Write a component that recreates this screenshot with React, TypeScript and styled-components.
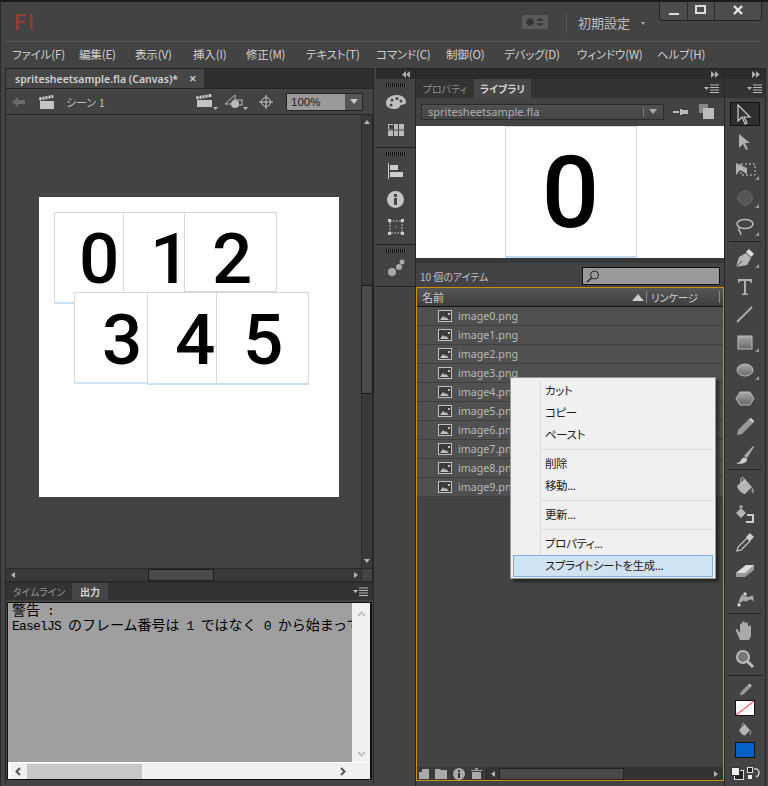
import React from 'react';
import styled, { createGlobalStyle } from 'styled-components';

const GlobalStyle = createGlobalStyle`
  html, body {
    margin: 0;
    padding: 0;
    background: #434343;
  }
  * {
    box-sizing: border-box;
  }
`;

const JP = `"Noto Sans CJK JP", "Noto Sans", sans-serif`;

const Win = styled.div`
  width: 768px;
  height: 786px;
  position: relative;
  overflow: hidden;
  display: flex;
  flex-direction: column;
  background: #434343;
  border-top: 2px solid #1b1b1b;
  border-left: 1px solid #2a2a2a;
  font-family: ${JP};
  font-feature-settings: "palt";
  color: #c8c8c8;
`;

const TitleBar = styled.div`
  height: 40px;
  flex: none;
  display: flex;
  align-items: flex-start;
  margin: 0 8px 0 4px;
  border-bottom: 1px solid #555;
`;

const Logo = styled.div`
  font-family: Roboto, sans-serif;
  font-weight: 500;
  font-size: 22px;
  line-height: 23px;
  color: #8f3f2f;
  width: 26px;
  margin: 9px 0 0 9px;
  letter-spacing: 2px;
`;

const SyncButton = styled.div`
  margin: 13px 0 0 482px;
  width: 26px;
  height: 14px;
  border-radius: 2px;
  background: #5a5a5a;
  display: flex;
  align-items: center;
  justify-content: center;
`;

const TitleSep = styled.div`
  width: 1px;
  height: 20px;
  background: #5a5a5a;
  margin: 11px 0 0 18px;
`;

const Workspace = styled.div`
  font-size: 13px;
  line-height: 16px;
  margin: 13px 0 0 11px;
  color: #bdbdbd;
  white-space: nowrap;
  width: 70px;
`;

const WindowCaret = styled.span`
  display: inline-block;
  margin-left: 11px;
  vertical-align: middle;
  width: 0;
  height: 0;
  border: 2.5px solid transparent;
  border-top: 3px solid #aaa;
`;

const WindowButtons = styled.div`
  position: absolute;
  top: -2px;
  left: 658px;
  width: 103px;
  height: 21px;
  display: flex;
  border: 1px solid #232323;
  border-top: none;
  border-radius: 0 0 4px 4px;
  background: #4c4c4c;
`;

const WindowButton = styled.div<{ $w: number }>`
  width: ${(p) => p.$w}px;
  display: flex;
  align-items: center;
  justify-content: center;
  border-right: 1px solid #2a2a2a;
  &:last-child {
    border-right: none;
  }
`;

const MenuBar = styled.div`
  height: 26px;
  flex: none;
  display: flex;
  align-items: center;
  padding: 0 0 2px 11px;
`;

const MenuItem = styled.div<{ $w: number }>`
  width: ${(p) => p.$w}px;
  font-size: 11.5px;
  line-height: 16px;
  letter-spacing: -0.15px;
  color: #cfcfcf;
  white-space: nowrap;
`;

const Main = styled.div`
  flex: 1;
  min-height: 0;
  display: flex;
  padding-left: 4px;
`;

const LeftColumn = styled.div`
  width: 369px;
  margin-right: 2px;
  flex: none;
  display: flex;
  flex-direction: column;
  border: 1px solid #262626;
  border-bottom: none;
  height: 716px;
`;

const DocTabs = styled.div`
  height: 20px;
  flex: none;
  display: flex;
  background: #2f2f2f;
  border-bottom: 1px solid #262626;
`;

const DocTab = styled.div`
  width: 198px;
  display: flex;
  align-items: center;
  justify-content: space-between;
  padding: 0 7px 0 9px;
  background: #464646;
  font-family: "Noto Sans", sans-serif;
  font-size: 10.5px;
  font-weight: 600;
  color: #d0d0d0;
  white-space: nowrap;
`;

const CloseX = styled.span`
  font-size: 9px;
  color: #ccc;
  font-weight: 700;
`;

const SceneBar = styled.div`
  height: 26px;
  flex: none;
  display: flex;
  align-items: center;
  padding-left: 6px;
  border-bottom: 1px solid #262626;
`;

const Spaced = styled.span<{ $left: number }>`
  display: flex;
  margin-left: ${(p) => p.$left}px;
`;

const SceneLabel = styled.div`
  margin-left: 11px;
  width: 130px;
  font-size: 11px;
  color: #bbb;
  white-space: nowrap;
`;

const ZoomCombo = styled.div`
  margin-left: 13px;
  width: 77px;
  height: 18px;
  display: flex;
  background: #2f2f2f;
  border: 1px solid #222;
`;

const ZoomValue = styled.div`
  width: 58px;
  background: #9a9a9a;
  color: #1c1c1c;
  font-family: "Liberation Sans", sans-serif;
  font-size: 11.5px;
  line-height: 16px;
  padding-left: 4px;
`;

const ZoomArrow = styled.div`
  flex: 1;
  background: #555;
  display: flex;
  align-items: center;
  justify-content: center;
`;

const Caret = styled.span<{ $dir: 'up' | 'down' | 'left' | 'right'; $color?: string; $size?: number }>`
  display: block;
  flex: none;
  width: 0;
  height: 0;
  border: ${(p) => p.$size ?? 4}px solid transparent;
  ${(p) => {
    const c = p.$color ?? '#b5b5b5';
    const s = p.$size ?? 4;
    if (p.$dir === 'up') return `border-bottom: ${s + 1}px solid ${c}; border-top: none;`;
    if (p.$dir === 'down') return `border-top: ${s + 1}px solid ${c}; border-bottom: none;`;
    if (p.$dir === 'left') return `border-right: ${s + 1}px solid ${c}; border-left: none;`;
    return `border-left: ${s + 1}px solid ${c}; border-right: none;`;
  }}
`;

const StageRow = styled.div`
  height: 453px;
  flex: none;
  display: flex;
`;

const Stage = styled.div`
  flex: 1;
  padding: 82px 0 0 33px;
  background: #434343;
`;

const Canvas = styled.div`
  width: 300px;
  height: 300px;
  background: #fff;
  position: relative;
`;

const Sprite = styled.div<{ $x: number; $y: number; $w: number; $h: number; $px: number; $pt: number; $edge: string }>`
  position: absolute;
  left: ${(p) => p.$x}px;
  top: ${(p) => p.$y}px;
  width: ${(p) => p.$w}px;
  height: ${(p) => p.$h}px;
  background: #fff;
  border: 1px solid #d9d9d9;
  border-bottom: 2px solid ${(p) => p.$edge};
  padding: ${(p) => p.$pt}px 0 0 ${(p) => p.$px}px;
  font-family: Roboto, "Liberation Sans", sans-serif;
  font-weight: 500;
  font-size: 71px;
  line-height: 71px;
  color: #000;
`;

const VScroll = styled.div`
  width: 12px;
  flex: none;
  display: flex;
  flex-direction: column;
  align-items: center;
  background: #393939;
  border-left: 1px solid #2a2a2a;
  border-right: 1px solid #2a2a2a;
`;

const VThumb = styled.div`
  width: 12px;
  height: 109px;
  margin-top: 156px;
  flex: none;
  background: #4a4a4a;
  border: 1px solid #1c1c1c;
`;

const ScrollEnd = styled.div`
  height: 14px;
  width: 100%;
  flex: none;
  display: flex;
  align-items: center;
  justify-content: center;
`;

const ScrollFill = styled.div`
  flex: 1;
`;

const HScrollRow = styled.div`
  height: 13px;
  flex: none;
  display: flex;
  background: #393939;
  border-top: 1px solid #2a2a2a;
`;

const HBar = styled.div`
  flex: 1;
  display: flex;
  align-items: center;
  padding: 0 3px 0 5px;
`;

const HCorner = styled.div`
  width: 12px;
  flex: none;
  background: #434343;
  border-left: 1px solid #2a2a2a;
  border-right: 1px solid #2a2a2a;
`;

const HThumb = styled.div`
  width: 66px;
  height: 12px;
  margin-left: 133px;
  background: #4a4a4a;
  border: 1px solid #1c1c1c;
`;

const HFill = styled.div`
  flex: 1;
`;

const PanelTabs = styled.div`
  height: 19px;
  flex: none;
  display: flex;
  align-items: stretch;
  background: #333;
  border-top: 2px solid #2a2a2a;
`;

const PanelTab = styled.div<{ $active?: boolean; $w: number }>`
  width: ${(p) => p.$w}px;
  display: flex;
  align-items: center;
  justify-content: center;
  font-size: 10px;
  font-weight: ${(p) => (p.$active ? 700 : 400)};
  color: ${(p) => (p.$active ? '#d5d5d5' : '#8f8f8f')};
  background: ${(p) => (p.$active ? '#464646' : 'transparent')};
  white-space: nowrap;
`;

const PanelMenu = styled.div`
  margin-left: auto;
  width: 20px;
  display: flex;
  align-items: center;
`;

const OutputFrame = styled.div`
  height: 178px;
  margin: 2px 1px 0;
  flex: none;
  display: flex;
  flex-direction: column;
  border: 1px solid #111;
  border-right-width: 2px;
  background: #f0f0f0;
`;

const OutputTop = styled.div`
  flex: 1;
  min-height: 0;
  display: flex;
`;

const OutputText = styled.div`
  flex: 1;
  min-width: 0;
  overflow: hidden;
  background: #9f9f9f;
  padding-left: 4px;
  font-family: "Noto Sans CJK JP", monospace;
  font-feature-settings: normal;
  font-size: 14px;
  line-height: 13px;
  color: #000;
  white-space: pre;
`;

const Half = styled.span`
  font-family: "Liberation Mono", monospace;
  font-size: 13px;
  letter-spacing: -0.8px;
`;

const OutputVBar = styled.div`
  width: 18px;
  flex: none;
  display: flex;
  flex-direction: column;
  align-items: center;
  justify-content: space-between;
  padding: 8px 0 4px;
  border-bottom: 1px solid #f0f0f0;
`;

const OutputHBar = styled.div`
  height: 17px;
  flex: none;
  display: flex;
  align-items: center;
  padding: 0 24px 0 4px;
  border-left: 2px solid #fff;
  border-top: 1px solid #fff;
  margin-left: 1px;
`;

const OutputThumb = styled.div`
  width: 115px;
  height: 15px;
  margin-left: 6px;
  background: #c8c8c8;
`;

const Dock = styled.div`
  width: 40px;
  flex: none;
  display: flex;
  flex-direction: column;
  border-right: 1px solid #262626;
`;

const CollapseBar = styled.div<{ $align?: string }>`
  height: 11px;
  flex: none;
  display: flex;
  align-items: center;
  justify-content: ${(p) => p.$align ?? 'flex-end'};
  padding: 0 5px;
  background: #2b2b2b;
  border-top: 1px solid #222;
`;

const DockGroup = styled.div<{ $h: number }>`
  height: ${(p) => p.$h}px;
  flex: none;
  display: flex;
  flex-direction: column;
  align-items: center;
  border-bottom: 1px solid #222;
  background: #434343;
`;

const Grip = styled.div`
  width: 20px;
  height: 4px;
  margin: 4px 0 1px;
  background: repeating-linear-gradient(90deg, #111 0 1px, #555 1px 2px);
  flex: none;
`;

const DockIcon = styled.div`
  height: 28px;
  flex: none;
  display: flex;
  align-items: center;
  justify-content: center;
`;

const RightPanel = styled.div`
  width: 309px;
  flex: none;
  display: flex;
  flex-direction: column;
  border-right: 1px solid #262626;
`;

const PropTabs = styled.div`
  height: 19px;
  flex: none;
  display: flex;
  background: #333;
  align-items: stretch;
`;

const FileRow = styled.div`
  height: 28px;
  flex: none;
  display: flex;
  align-items: center;
  padding: 0 0 1px 5px;
`;

const FileSelect = styled.div`
  width: 243px;
  height: 16px;
  display: flex;
  align-items: center;
  justify-content: space-between;
  background: linear-gradient(#505050, #454545);
  border: 1px solid #2b2b2b;
  padding: 0 6px;
  font-family: "Noto Sans", sans-serif;
  font-size: 11px;
  color: #b0b0b0;
`;

const SelectEnd = styled.div`
  display: flex;
  align-items: center;
  gap: 5px;
`;

const SelectSep = styled.span`
  width: 1px;
  height: 10px;
  background: #777;
`;

const FileIcons = styled.div`
  display: flex;
  align-items: center;
  gap: 10px;
  margin-left: 9px;
`;

const Preview = styled.div`
  height: 132px;
  flex: none;
  background: #fff;
  display: flex;
  justify-content: center;
`;

const PreviewCard = styled.div`
  width: 132px;
  height: 132px;
  margin-left: 1px;
  border: 1px solid #d4d4d4;
  border-bottom: 2px solid #c2daef;
  font-family: Roboto, "Liberation Sans", sans-serif;
  font-weight: 500;
  font-size: 101px;
  line-height: 131px;
  text-align: center;
  color: #000;
`;

const PreviewGap = styled.div`
  height: 5px;
  flex: none;
  background: #383838;
`;

const CountRow = styled.div`
  height: 24px;
  flex: none;
  display: flex;
  align-items: center;
  justify-content: space-between;
  padding: 2px 4px 0 4px;
  font-size: 10px;
  color: #c0c0c0;
`;

const SearchBox = styled.div`
  width: 138px;
  height: 18px;
  background: #9a9a9a;
  border: 1px solid #111;
  display: flex;
  align-items: center;
  padding-left: 3px;
`;

const Library = styled.div`
  height: 494px;
  flex: none;
  display: flex;
  flex-direction: column;
  border: 1px solid #c8920e;
`;

const LibHead = styled.div`
  height: 19px;
  flex: none;
  display: flex;
  align-items: center;
  background: linear-gradient(#565656, #3e3e3e);
  border-bottom: 1px solid #111;
  font-size: 11px;
  color: #ccc;
  padding-left: 5px;
`;

const HeadName = styled.div`
  width: 208px;
`;

const HeadSort = styled.div`
  width: 15px;
  display: flex;
  justify-content: center;
`;

const HeadDivider = styled.div<{ $left: number }>`
  width: 1px;
  height: 12px;
  background: #888;
  margin-left: ${(p) => p.$left}px;
`;

const HeadLink = styled.div`
  width: 72px;
  padding-left: 4px;
  font-size: 10.5px;
  letter-spacing: -0.3px;
  white-space: nowrap;
`;

const LibRow = styled.div`
  height: 19px;
  flex: none;
  display: flex;
  align-items: center;
  padding-left: 21px;
  background: #505050;
  border-bottom: 1px solid #3f3f3f;
  font-family: "Noto Sans", sans-serif;
  font-size: 10.7px;
  color: #b8b8b8;
  white-space: nowrap;
`;

const RowName = styled.span`
  margin-left: 6px;
`;

const LibEmpty = styled.div`
  flex: 1;
  background: #434343;
`;

const LibFoot = styled.div`
  height: 13px;
  flex: none;
  display: flex;
  align-items: center;
  background: #3a3a3a;
  padding-left: 2px;
`;

const FootIcons = styled.div`
  width: 67px;
  flex: none;
  display: flex;
  align-items: center;
  gap: 6px;
`;

const FootScroll = styled.div`
  flex: 1;
  height: 13px;
  display: flex;
  align-items: center;
  background: #333;
  border-left: 1px solid #2a2a2a;
  padding: 0 5px 0 4px;
`;

const FootThumb = styled.div`
  width: 125px;
  height: 12px;
  margin-left: 4px;
  background: #484848;
  border: 1px solid #222;
`;

const ToolColumn = styled.div`
  flex: 1;
  display: flex;
  flex-direction: column;
  margin-right: 2px;
  border-right: 1px solid #262626;
`;

const ToolHead = styled.div`
  height: 19px;
  flex: none;
  display: flex;
  align-items: center;
  justify-content: flex-end;
  padding-right: 2px;
  background: #333;
`;

const ToolList = styled.div`
  display: flex;
  flex-direction: column;
  align-items: center;
  padding-top: 4px;
`;

const Tool = styled.div<{ $active?: boolean; $corner?: boolean }>`
  width: 30px;
  height: ${(p) => (p.$active ? 24 : 28)}px;
  margin-bottom: ${(p) => (p.$active ? 2 : 0)}px;
  flex: none;
  display: flex;
  align-items: center;
  justify-content: center;
  position: relative;
  background: ${(p) => (p.$active ? '#2e2e2e' : 'transparent')};
  border: ${(p) => (p.$active ? '1px solid #111' : 'none')};
  ${(p) =>
    p.$corner &&
    `&::after {
      content: '';
      position: absolute;
      right: 1px;
      bottom: 4px;
      border: 2px solid transparent;
      border-right-color: #999;
      border-bottom-color: #999;
    }`}
`;

const ToolSep = styled.div<{ $wide?: boolean; $top?: number; $bottom?: number }>`
  width: ${(p) => (p.$wide ? 36 : 32)}px;
  height: 1px;
  flex: none;
  background: #222;
  margin: ${(p) => p.$top ?? 1}px 0 ${(p) => p.$bottom ?? 2}px;
`;

const Swatch = styled.div<{ $bg: string; $top: number }>`
  width: 20px;
  height: 16px;
  flex: none;
  margin-top: ${(p) => p.$top}px;
  border: 1px solid #111;
  background: ${(p) => p.$bg};
`;

const SwatchIcon = styled.div<{ $top: number }>`
  margin-top: ${(p) => p.$top}px;
  height: 16px;
  flex: none;
  display: flex;
  align-items: center;
`;

const SwatchFoot = styled.div`
  display: flex;
  gap: 3px;
  margin-top: 9px;
`;

const ContextMenu = styled.div`
  position: absolute;
  left: 509px;
  top: 375px;
  width: 206px;
  height: 202px;
  padding: 2px;
  background: #f0f0f0;
  border: 1px solid #979797;
  box-shadow: 3px 3px 3px rgba(0, 0, 0, 0.45);
  font-size: 11.5px;
  letter-spacing: -0.4px;
  color: #1a1a1a;
  display: flex;
  flex-direction: column;
`;

const MenuGutter = styled.div`
  position: absolute;
  left: 29px;
  top: 2px;
  bottom: 2px;
  width: 1px;
  background: #dcdcdc;
`;

const CtxItem = styled.div<{ $hl?: boolean }>`
  position: relative;
  height: 22px;
  flex: none;
  display: flex;
  align-items: center;
  padding: 0 0 2px 31px;
  background: ${(p) => (p.$hl ? '#d1e2f2' : 'transparent')};
  border: 1px solid ${(p) => (p.$hl ? '#7eb0e0' : 'transparent')};
  white-space: nowrap;
`;

const CtxSep = styled.div`
  height: 1px;
  flex: none;
  margin: 3px 0 3px 29px;
  background: #d7d7d7;
`;

// icons
const Clapper = () => (
  <svg width={16} height={14} viewBox="0 0 16 14">
    <path d="M1 6h14v8H1z" fill="#c4c4c4" />
    <path d="M0 2.500 14 0l.6 2.800-14 2.600z" fill="#d6d6d6" />
    <path d="M3 2v3M6 1.500v3M9 1v3M12 .5v3" stroke="#444" />
  </svg>
);

const ClapperMenu = () => (
  <svg width={22} height={16} viewBox="0 0 22 16">
    <path d="M1 6h15v7H1z" fill="#c4c4c4" />
    <path d="M0 2.500 15 0l.6 2.800-15 2.600z" fill="#d6d6d6" />
    <path d="M3 2v3M6 1.500v3M9 1v3M12 .5v3" stroke="#444" />
    <path d="M17 13h5l-2.500 3z" fill="#bbb" />
  </svg>
);

const PanelMenuIcon = () => (
  <svg width={16} height={9} viewBox="0 0 16 9">
    <path d="M0 3h5L2.500 6z" fill="#bbb" />
    <path d="M6 1h9M6 3.500h9M6 6h9M6 8.500h9" stroke="#bbb" strokeWidth="1" />
  </svg>
);

const Chevrons = ({ left }: { left?: boolean }) => (
  <svg width={8} height={7} viewBox="0 0 8 7">
    {left ? <path d="M4 0v7L0 3.500zM8 0v7L4 3.500z" fill="#aaa" /> : <path d="M0 0v7l4-3.500zM4 0v7l4-3.500z" fill="#aaa" />}
  </svg>
);

const FileImage = () => (
  <svg width={14} height={12} viewBox="0 0 14 12">
    <rect x=".5" y=".5" width="13" height="11" fill="#3c3c3c" stroke="#c0c0c0" />
    <path d="M2 10l3-4 2 2 1-1 3 3z" fill="#c0c0c0" />
    <path d="M10 3h2v2h-2z" fill="#c0c0c0" />
  </svg>
);

const toolIcons: Record<string, React.ReactNode> = {
  arrow: <path d="M4 1v16l4-4 3 7 2-1-3-6h6z" fill="#333" stroke="#ccc" strokeWidth="1.200" />,
  sub: <path d="M5 2v14l4-4 3 6 2-1-3-6h5z" fill="#b0b0b0" />,
  lasso3: (
    <g>
      <path d="M2 3v12l4-5 7 4V8z" fill="#b0b0b0" />
      <rect x="7" y="4" width="14" height="11" fill="none" stroke="#ccc" strokeDasharray="2 2" />
    </g>
  ),
  sphere: (
    <g opacity=".45">
      <path d="M11 1l9 9-9 9-9-9z" fill="#777" />
      <circle cx="11" cy="10" r="7" fill="#6d6d6d" stroke="#888" />
    </g>
  ),
  lasso: (
    <g fill="none" stroke="#b5b5b5" strokeWidth="1.600">
      <ellipse cx="11" cy="8" rx="8" ry="4.500" />
      <path d="M5 12c-1 2 0 3 1 4s1 2 .5 3" />
    </g>
  ),
  pen: (
    <g>
      <path d="M2 19l3-10 7-4 5 5-4 7z" fill="#b5b5b5" />
      <path d="M12 4l3-3 5 5-3 3z" fill="#ddd" />
      <path d="M2 19l6-6" stroke="#444" />
    </g>
  ),
  text: <path d="M4 3h14v4h-1c0-1-1-2-2-2h-3v12l2 1v1H8v-1l2-1V5H7c-1 0-2 1-2 2H4z" fill="#b0b0b0" />,
  line: <path d="M3 18 18 3" stroke="#aaa" strokeWidth="2" />,
  rect: (
    <g>
      <defs>
        <linearGradient id="gr" x1="0" y1="0" x2="0" y2="1">
          <stop offset="0" stopColor="#aaa" />
          <stop offset="1" stopColor="#666" />
        </linearGradient>
      </defs>
      <rect x="4" y="4" width="14" height="13" fill="url(#gr)" stroke="#bbb" />
    </g>
  ),
  oval: <ellipse cx="11" cy="10" rx="8" ry="6" fill="url(#gr)" stroke="#bbb" />,
  poly: <path d="M6 4h10l4 6.500-4 6.500H6L2 10.500z" fill="url(#gr)" stroke="#bbb" />,
  pencil: (
    <g>
      <path d="M3 19l1-5L15 3l4 4L8 18z" fill="#999" />
      <path d="M15 3l2-1 3 3-1 2z" fill="#ddd" />
    </g>
  ),
  brush: (
    <g>
      <path d="M10 12 19 2l1 1-7 11z" fill="#aaa" />
      <path d="M2 19c3 0 4-1 5-3 1-2 3-3 5-2s1 3 0 4-7 3-10 1z" fill="#ccc" />
    </g>
  ),
  bucket: (
    <g>
      <path d="M3 10l8-7 7 8-7 7c-3 0-7-4-8-8z" fill="#b5b5b5" />
      <path d="M7 9V3c0-2 3-2 3 0v5" fill="none" stroke="#ccc" />
      <path d="M18 11c2 2 2 5 1 6s-2-1-1-6z" fill="#999" />
    </g>
  ),
  ink: (
    <g>
      <path d="M2 9l5-5 5 5-5 5z" fill="#b5b5b5" />
      <path d="M6 4V2h2v2" fill="none" stroke="#ccc" />
      <path d="M13 10h7v9h-8v-2h6v-5h-5z" fill="#ccc" />
    </g>
  ),
  dropper: (
    <g>
      <path d="M3 19l1-4 9-9 3 3-9 9z" fill="none" stroke="#ccc" strokeWidth="1.200" />
      <path d="M12 5l4-4 4 4-4 4z" fill="#ccc" />
    </g>
  ),
  eraser: (
    <g>
      <path d="M2 13 12 5h8v5l-9 7H2z" fill="#999" />
      <path d="M2 13 12 5h8l-9 8z" fill="#ddd" />
    </g>
  ),
  bone: (
    <g>
      <path d="M4 17c1-5 3-11 6-11s2 3 4 3 3-2 5-1l1 6c-1-2-3-3-5-2s-3 2-5 1-3 2-6 4z" fill="#aaa" />
      <circle cx="5" cy="17" r="2" fill="#ddd" stroke="#333" strokeWidth=".6" />
      <circle cx="11" cy="6" r="2" fill="#ddd" stroke="#333" strokeWidth=".6" />
    </g>
  ),
  hand: (
    <path
      d="M6 20 2 11c-1-2 1-3 2-1l2 3V5c0-2 2-2 2 0v4V3c0-2 3-2 3 0v6V4c0-2 3-2 3 0v6-3c0-2 3-2 3 0v7c0 4-2 6-3 6z"
      fill="#aaa"
    />
  ),
  zoom: (
    <g>
      <circle cx="9" cy="9" r="6" fill="#777" stroke="#bbb" strokeWidth="2" />
      <path d="M13 13l6 6" stroke="#bbb" strokeWidth="3" />
    </g>
  ),
};

const ToolIcon = ({ name }: { name: string }) => (
  <svg width={22} height={21} viewBox="0 0 22 21">
    {toolIcons[name]}
  </svg>
);

const menus: [string, number][] = [
  ['ファイル(F)', 67],
  ['編集(E)', 56],
  ['表示(V)', 58],
  ['挿入(I)', 53],
  ['修正(M)', 60],
  ['テキスト(T)', 70],
  ['コマンド(C)', 70],
  ['制御(O)', 58],
  ['デバッグ(D)', 73],
  ['ウィンドウ(W)', 80],
  ['ヘルプ(H)', 60],
];

const sprites = [
  { d: '0', x: 15, y: 15, w: 70, h: 92, px: 24, pt: 10, edge: '#c9dff2' },
  { d: '1', x: 84, y: 15, w: 62, h: 92, px: 26, pt: 10, edge: '#d9d9d9' },
  { d: '2', x: 145, y: 15, w: 93, h: 81, px: 27, pt: 10, edge: '#d9d9d9' },
  { d: '3', x: 35, y: 95, w: 74, h: 92, px: 27, pt: 11, edge: '#d0e4f7' },
  { d: '4', x: 108, y: 95, w: 70, h: 93, px: 27, pt: 11, edge: '#c9dff2' },
  { d: '5', x: 177, y: 95, w: 93, h: 93, px: 26, pt: 11, edge: '#c9dff2' },
];

const tools: ({ n: string; corner?: boolean } | 'sep')[] = [
  { n: 'sub' },
  { n: 'lasso3', corner: true },
  { n: 'sphere', corner: true },
  { n: 'lasso', corner: true },
  'sep',
  { n: 'pen', corner: true },
  { n: 'text' },
  { n: 'line' },
  { n: 'rect', corner: true },
  { n: 'oval', corner: true },
  { n: 'poly' },
  { n: 'pencil' },
  { n: 'brush' },
  'sep',
  { n: 'bucket' },
  { n: 'ink' },
  { n: 'dropper' },
  { n: 'eraser' },
  { n: 'bone' },
  'sep',
  { n: 'hand' },
  { n: 'zoom' },
];

export default function App() {
  return (
    <Win>
      <GlobalStyle />
      <TitleBar>
        <Logo>Fl</Logo>
        <SyncButton>
          <svg width={20} height={10} viewBox="0 0 20 10">
            <circle cx="5" cy="5" r="3" fill="#333" stroke="#333" strokeDasharray="1.500 1" strokeWidth="2" />
            <path d="M12 3h5l-2-2M18 7h-5l2 2" stroke="#333" strokeWidth="1.500" fill="none" />
          </svg>
        </SyncButton>
        <TitleSep />
        <Workspace>
          初期設定
          <WindowCaret />
        </Workspace>
      </TitleBar>
      <WindowButtons>
        <WindowButton $w={28}>
          <svg width={12} height={12} viewBox="0 0 12 12">
            <path d="M1 9h10v2H1z" fill="#ddd" />
          </svg>
        </WindowButton>
        <WindowButton $w={27}>
          <svg width={12} height={10} viewBox="0 0 12 10">
            <path d="M1 1h9v7H1z" fill="none" stroke="#ddd" strokeWidth="2" />
          </svg>
        </WindowButton>
        <WindowButton $w={46}>
          <svg width={12} height={10} viewBox="0 0 12 10">
            <path d="M2 1l8 8M10 1 2 9" stroke="#e8e8e8" strokeWidth="2.400" />
          </svg>
        </WindowButton>
      </WindowButtons>

      <MenuBar>
        {menus.map(([label, w]) => (
          <MenuItem key={label} $w={w}>
            {label}
          </MenuItem>
        ))}
      </MenuBar>

      <Main>
        <LeftColumn>
          <DocTabs>
            <DocTab>
              spritesheetsample.fla (Canvas)*
              <CloseX>✕</CloseX>
            </DocTab>
          </DocTabs>
          <SceneBar>
            <svg width={13} height={10} viewBox="0 0 13 10">
              <path d="M0 5l6-5v3h7v4H6v3z" fill="#6a6a6a" />
            </svg>
            <Spaced $left={14}>
              <Clapper />
            </Spaced>
            <SceneLabel>シーン 1</SceneLabel>
            <ClapperMenu />
            <Spaced $left={7}>
              <svg width={24} height={16} viewBox="0 0 24 16">
                <path d="M0 10 10 1v9z" fill="none" stroke="#bbb" />
                <circle cx="10" cy="10" r="4" fill="#bbb" />
                <rect x="10" y="6" width="7" height="5" fill="none" stroke="#bbb" />
                <path d="M18 13h5l-2.500 3z" fill="#bbb" />
              </svg>
            </Spaced>
            <Spaced $left={10}>
              <svg width={14} height={14} viewBox="0 0 14 14">
                <circle cx="7" cy="7" r="4.500" fill="none" stroke="#ccc" />
                <path d="M7 0v14M0 7h14" stroke="#ccc" />
              </svg>
            </Spaced>
            <ZoomCombo>
              <ZoomValue>100%</ZoomValue>
              <ZoomArrow>
                <Caret $dir="down" $size={4} $color="#ccc" />
              </ZoomArrow>
            </ZoomCombo>
          </SceneBar>

          <StageRow>
            <Stage>
              <Canvas>
                {sprites.map((s) => (
                  <Sprite key={s.d} $x={s.x} $y={s.y} $w={s.w} $h={s.h} $px={s.px} $pt={s.pt} $edge={s.edge}>
                    {s.d}
                  </Sprite>
                ))}
              </Canvas>
            </Stage>
            <VScroll>
              <ScrollEnd>
                <Caret $dir="up" $size={3} />
              </ScrollEnd>
              <VThumb />
              <ScrollFill />
              <ScrollEnd>
                <Caret $dir="down" $size={3} />
              </ScrollEnd>
            </VScroll>
          </StageRow>
          <HScrollRow>
            <HBar>
              <Caret $dir="left" $size={3} />
              <HThumb />
              <HFill />
              <Caret $dir="right" $size={3} />
            </HBar>
            <HCorner />
          </HScrollRow>

          <PanelTabs>
            <PanelTab $w={66}>タイムライン</PanelTab>
            <PanelTab $w={36} $active>
              出力
            </PanelTab>
            <PanelMenu>
              <PanelMenuIcon />
            </PanelMenu>
          </PanelTabs>
          <OutputFrame>
            <OutputTop>
              <OutputText>
                警告<Half> :</Half>
                {'\n'}
                <Half>EaselJS </Half>のフレーム番号は<Half> 1 </Half>ではなく<Half> 0 </Half>から始まって
              </OutputText>
              <OutputVBar>
                <svg width={9} height={6} viewBox="0 0 9 6">
                  <path d="M1 5l3.500-3.500L8 5" fill="none" stroke="#c0c0c0" strokeWidth="2" />
                </svg>
                <svg width={9} height={6} viewBox="0 0 9 6">
                  <path d="M1 1l3.500 3.500L8 1" fill="none" stroke="#c0c0c0" strokeWidth="2" />
                </svg>
              </OutputVBar>
            </OutputTop>
            <OutputHBar>
              <svg width={6} height={9} viewBox="0 0 6 9">
                <path d="M5 1 1.500 4.500 5 8" fill="none" stroke="#555" strokeWidth="2" />
              </svg>
              <OutputThumb />
              <HFill />
              <svg width={6} height={9} viewBox="0 0 6 9">
                <path d="M1 1l3.500 3.500L1 8" fill="none" stroke="#555" strokeWidth="2" />
              </svg>
            </OutputHBar>
          </OutputFrame>
        </LeftColumn>

        <Dock>
          <CollapseBar>
            <Chevrons left />
          </CollapseBar>
          <DockGroup $h={69}>
            <Grip />
            <DockIcon>
              <svg width={22} height={16} viewBox="0 0 22 16">
                <path d="M1 9c0-5 5-8 11-8s9 4 9 7-3 2-5 3-1 4-6 4S1 13 1 9z" fill="#c0c0c0" />
                <circle cx="7" cy="6" r="1.500" fill="#444" />
                <circle cx="12" cy="4.500" r="1.500" fill="#444" />
                <circle cx="16" cy="7" r="1.500" fill="#444" />
                <circle cx="6" cy="11" r="1.500" fill="#444" />
              </svg>
            </DockIcon>
            <DockIcon>
              <svg width={16} height={12} viewBox="0 0 16 12">
                <rect width="16" height="12" fill="#bbb" />
                <path d="M5.500 0v12M10.500 0v12M0 6h16" stroke="#444" />
                <rect x="1" y="1" width="4" height="4" fill="#444" />
              </svg>
            </DockIcon>
          </DockGroup>
          <DockGroup $h={97}>
            <Grip />
            <DockIcon>
              <svg width={16} height={16} viewBox="0 0 16 16">
                <path d="M.5 0v16" stroke="#ccc" />
                <rect x="2" y="2" width="8" height="5" fill="#ccc" />
                <rect x="2" y="9" width="13" height="5" fill="#ccc" />
              </svg>
            </DockIcon>
            <DockIcon>
              <svg width={17} height={17} viewBox="0 0 17 17">
                <circle cx="8.500" cy="8.500" r="8.500" fill="#c4c4c4" />
                <rect x="7" y="7" width="3" height="7" fill="#444" />
                <rect x="7" y="3" width="3" height="3" fill="#444" />
              </svg>
            </DockIcon>
            <DockIcon>
              <svg width={16} height={16} viewBox="0 0 16 16">
                <rect x="2" y="2" width="12" height="12" fill="none" stroke="#bbb" strokeDasharray="2 1" />
                <path d="M0 0h3v3H0zM13 0h3v3h-3zM0 13h3v3H0zM13 13h3v3h-3zM7.500 7.500h1v1h-1z" fill="#ccc" />
              </svg>
            </DockIcon>
          </DockGroup>
          <DockGroup $h={42}>
            <Grip />
            <DockIcon>
              <svg width={18} height={18} viewBox="0 0 18 18">
                <circle cx="5" cy="13" r="4" fill="#aaa" />
                <circle cx="12" cy="8" r="3" fill="#aaa" />
                <circle cx="15" cy="3" r="2.500" fill="#aaa" />
              </svg>
            </DockIcon>
          </DockGroup>
        </Dock>

        <RightPanel>
          <CollapseBar>
            <Chevrons />
          </CollapseBar>
          <PropTabs>
            <PanelTab $w={58}>プロパティ</PanelTab>
            <PanelTab $w={57} $active>
              ライブラリ
            </PanelTab>
            <PanelMenu>
              <PanelMenuIcon />
            </PanelMenu>
          </PropTabs>
          <FileRow>
            <FileSelect>
              spritesheetsample.fla
              <SelectEnd>
                <SelectSep />
                <Caret $dir="down" $size={4} $color="#aaa" />
              </SelectEnd>
            </FileSelect>
            <FileIcons>
              <svg width={16} height={10} viewBox="0 0 16 10">
                <path d="M0 4h6v2H0zM7 2h2v6H7zM9 3h6v4H9z" fill="#bbb" />
              </svg>
              <svg width={15} height={15} viewBox="0 0 15 15">
                <rect width="9" height="9" fill="#888" />
                <rect x="4" y="4" width="11" height="11" fill="#bbb" />
              </svg>
            </FileIcons>
          </FileRow>
          <Preview>
            <PreviewCard>0</PreviewCard>
          </Preview>
          <PreviewGap />
          <CountRow>
            10 個のアイテム
            <SearchBox>
              <svg width={14} height={13} viewBox="0 0 14 13">
                <circle cx="8.500" cy="5" r="4" fill="none" stroke="#222" />
                <path d="M5.500 8 1 12" stroke="#222" strokeWidth="1.500" />
              </svg>
            </SearchBox>
          </CountRow>
          <Library>
            <LibHead>
              <HeadName>名前</HeadName>
              <HeadSort>
                <Caret $dir="up" $size={6} $color="#ccc" />
              </HeadSort>
              <HeadDivider $left={1} />
              <HeadLink>リンケージ</HeadLink>
              <HeadDivider $left={0} />
            </LibHead>
            {[0, 1, 2, 3, 4, 5, 6, 7, 8, 9].map((i) => (
              <LibRow key={i}>
                <FileImage />
                <RowName>{`image${i}.png`}</RowName>
              </LibRow>
            ))}
            <LibEmpty />
            <LibFoot>
              <FootIcons>
                <svg width={10} height={10} viewBox="0 0 10 10">
                  <path d="M3 0h7v10H0V3h3z" fill="#aaa" />
                </svg>
                <svg width={12} height={10} viewBox="0 0 12 10">
                  <path d="M0 0h5l1 1h6v9H0z" fill="#aaa" />
                </svg>
                <svg width={12} height={12} viewBox="0 0 12 12">
                  <circle cx="6" cy="6" r="6" fill="#aaa" />
                  <path d="M5 5h2v5H5zM5 2h2v2H5z" fill="#333" />
                </svg>
                <svg width={11} height={11} viewBox="0 0 11 11">
                  <path d="M0 2h11v1H0zM4 0h3v1.500H4zM1 4h9v7H1z" fill="#aaa" />
                </svg>
              </FootIcons>
              <FootScroll>
                <Caret $dir="left" $size={3} />
                <FootThumb />
                <HFill />
                <Caret $dir="right" $size={3} />
              </FootScroll>
            </LibFoot>
          </Library>
        </RightPanel>

        <ToolColumn>
          <CollapseBar>
            <Chevrons />
          </CollapseBar>
          <ToolHead>
            <PanelMenuIcon />
          </ToolHead>
          <ToolList>
            <Tool $active>
              <ToolIcon name="arrow" />
            </Tool>
            {tools.map((t, i) =>
              t === 'sep' ? (
                <ToolSep key={i} />
              ) : (
                <Tool key={i} $corner={t.corner}>
                  <ToolIcon name={t.n} />
                </Tool>
              )
            )}
            <ToolSep $wide $top={3} $bottom={5} />
            <SwatchIcon $top={0}>
              <svg width={15} height={15} viewBox="0 0 22 21">
                {toolIcons.pencil}
              </svg>
            </SwatchIcon>
            <Swatch $top={3} $bg="linear-gradient(to top left, #fff calc(50% - 1px), #f04040 50%, #fff calc(50% + 1px))" />
            <SwatchIcon $top={6}>
              <svg width={16} height={16} viewBox="0 0 22 21">
                {toolIcons.bucket}
              </svg>
            </SwatchIcon>
            <Swatch $top={4} $bg="#0563c8" />
            <SwatchFoot>
              <svg width={13} height={13} viewBox="0 0 13 13">
                <rect x="3.500" y="3.500" width="9" height="9" fill="#222" stroke="#ddd" />
                <rect x=".5" y=".5" width="8" height="8" fill="#eee" stroke="#333" />
              </svg>
              <svg width={13} height={13} viewBox="0 0 13 13">
                <rect x=".5" y=".5" width="5" height="5" fill="#222" stroke="#ddd" />
                <rect x="1" y="8" width="4" height="4" fill="#eee" />
                <path d="M7 2h3c3 2 3 6-1 8" fill="none" stroke="#ccc" strokeWidth="1.500" />
              </svg>
            </SwatchFoot>
          </ToolList>
        </ToolColumn>
      </Main>

      <ContextMenu>
        <MenuGutter />
        <CtxItem>カット</CtxItem>
        <CtxItem>コピー</CtxItem>
        <CtxItem>ペースト</CtxItem>
        <CtxSep />
        <CtxItem>削除</CtxItem>
        <CtxItem>移動...</CtxItem>
        <CtxSep />
        <CtxItem>更新...</CtxItem>
        <CtxSep />
        <CtxItem>プロパティ...</CtxItem>
        <CtxItem $hl>スプライトシートを生成...</CtxItem>
      </ContextMenu>
    </Win>
  );
}
